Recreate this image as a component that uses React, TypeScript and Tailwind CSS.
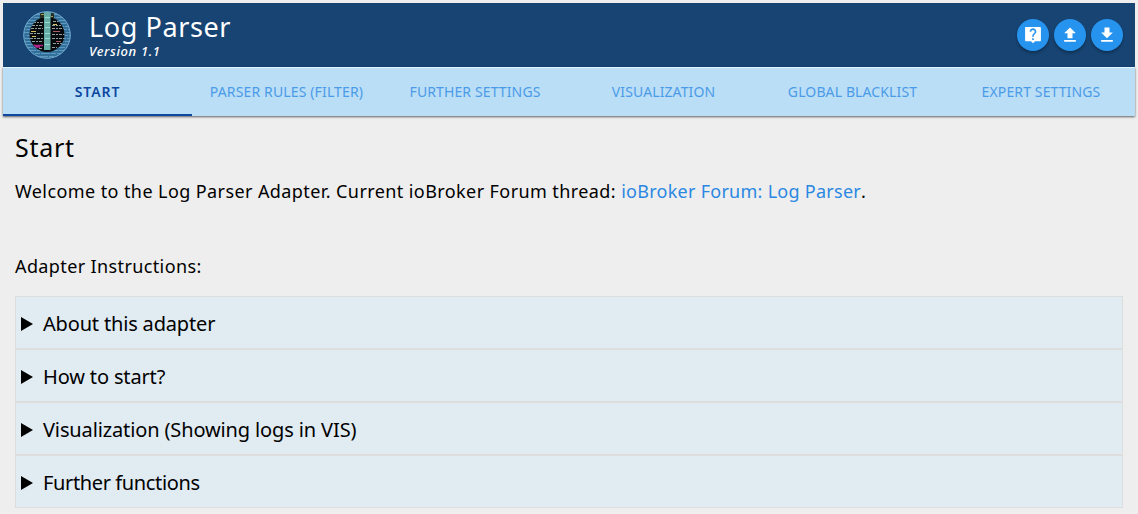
import { useState } from "react";

const tabs = [
  { label: "Start", width: "w-[189px]", tracking: "tracking-[0.9px]" },
  { label: "Parser Rules (Filter)", width: "w-[189px]", tracking: "tracking-[0.14px]" },
  { label: "Further Settings", width: "w-[188px]", tracking: "tracking-[0.12px]" },
  { label: "Visualization", width: "w-[189px]", tracking: "tracking-[0.1px]" },
  { label: "Global Blacklist", width: "w-[189px]", tracking: "tracking-[0.12px]" },
  { label: "Expert Settings", width: "w-[188px]", tracking: "tracking-[0.12px]" },
];

const sections = [
  { title: "About this adapter", tracking: "tracking-[-0.17px]" },
  { title: "How to start?", tracking: "tracking-[-0.15px]" },
  { title: "Visualization (Showing logs in VIS)", tracking: "tracking-[-0.13px]" },
  { title: "Further functions", tracking: "tracking-[-0.37px]" },
];

const actions = [
  {
    label: "Help",
    path: "M20.500 2.500H3.500c-.8 0-1 .4-1 1v15c0 .7.400 1 1 1h6l2.500 2.500 2.500-2.500h6c.7 0 1-.4 1-1v-15c0-.6-.3-1-1-1zM13 18h-2v-2h2v2zm2.070-7.750l-.9.920C13.450 11.900 13 12.500 13 14h-2v-.5c0-1.100.450-2.100 1.170-2.830l1.240-1.260c.370-.360.590-.860.590-1.410 0-1.100-.9-2-2-2s-2 .9-2 2H8c0-2.210 1.790-4 4-4s4 1.790 4 4c0 .880-.360 1.680-.930 2.250z",
  },
  { label: "Upload", path: "M9 16h6v-6h4l-7-7-7 7h4v6zm-4 2h14v2H5v-2z" },
  { label: "Download", path: "M19 9h-4V3H9v6H5l7 7 7-7zM5 18v2h14v-2H5z" },
];

function Logo() {
  return (
    <svg viewBox="0 0 48 48" className="size-12" aria-hidden="true">
      <defs>
        <clipPath id="disc"><circle cx="24" cy="24" r="23.500" /></clipPath>
        <clipPath id="core"><circle cx="24" cy="23.500" r="17.500" /></clipPath>
      </defs>
      <circle cx="24" cy="24" r="23.500" fill="#33709c" />
      <g clipPath="url(#disc)" stroke="#7db4d2" strokeWidth="1" strokeDasharray="9 1 5 1" opacity=".6">
        {[3, 6, 9, 12, 15, 18, 21, 24, 27, 30, 33, 36, 39, 42, 45].map((y) => (
          <path key={y} d={`M${y % 5} ${y + 0.5}H48`} />
        ))}
      </g>
      <circle cx="24" cy="23.500" r="17.500" fill="#080b0d" />
      <g clipPath="url(#core)" strokeWidth="1" fill="none">
        <path d="M10 11.500h10M30 10.500h7M9 14.500h11M29 14.500h9M8 17.500h12M29 17.500h12M7 22.500h13M29 23.500h13M7 27.500h13M29 27.500h12M9 30.500h11M30 32.500h9M16 37.500h4M29 36.500h5" stroke="#a9bcbc" strokeDasharray="3 1 2 1" opacity=".85" />
        <path d="M8 20.500h5M30 13.500h4M9 25.500h4" stroke="#d0bd60" />
        <path d="M10 34.500h10M12 36h5" stroke="#b02488" strokeWidth="1.500" />
        <path d="M30 20.500h7M33 30.500h5" stroke="#a26066" />
      </g>
      <path d="M17 2h4v5h-4zM28 2h3v5h-3z" fill="#252e20" />
      <path d="M18 3.500h3M28 5.500h2" stroke="#9c9b55" strokeWidth="1" />
      <path d="M21 1h6.500v38h-6.500z" fill="#67ada7" />
      <path d="M22 6.500h5M22 11.500h5M22 16.500h5M22 22.500h5M22 27.500h5M22 33.500h5" stroke="#98ddd0" strokeWidth="1" />
      <circle cx="24" cy="24" r="23.300" fill="none" stroke="#72a9cf" strokeWidth="1" />
    </svg>
  );
}

export default function App() {
  const [active, setActive] = useState(0);

  return (
    <div className="h-[514px] overflow-hidden bg-[#eeeeee] px-[3px] pt-[3px] font-['Noto_Sans',sans-serif] text-black">
      <header className="flex h-16 items-center bg-[#174473] pr-3 pl-5 text-white">
        <Logo />
        <div className="ml-[18px] flex flex-col">
          <h1 className="text-[27px] leading-8 tracking-[0.6px] whitespace-nowrap">Log Parser</h1>
          <p className="text-[13px] leading-4 font-medium tracking-[0.65px] italic">Version 1.1</p>
        </div>
        <div className="ml-auto flex gap-[5px]">
          {actions.map((action) => (
            <button key={action.label} aria-label={action.label} className="flex size-8 items-center justify-center rounded-full bg-[#2694ef] shadow-[0_2px_3px_rgba(0,0,0,0.3)]">
              <svg viewBox="0 0 24 24" className="size-5" fill="currentColor"><path d={action.path} /></svg>
            </button>
          ))}
        </div>
      </header>
      <nav className="flex h-[49px] border-t border-[#e3f2fd] bg-[#badef6] shadow-[0_1px_2px_rgba(0,0,0,0.6)]">
        {tabs.map((tab, i) => (
          <button
            key={tab.label}
            onClick={() => setActive(i)}
            className={`${tab.width} ${tab.tracking} flex shrink-0 items-center justify-center border-b-2 text-[14px] whitespace-nowrap uppercase ${active === i ? "border-[#0d47a1] font-semibold text-[#0d47a1]" : "border-transparent text-[#4b9be8]"}`}
          >
            {tab.label}
          </button>
        ))}
      </nav>
      <main className="px-3 pt-[13px]">
        <h2 className="text-[25px] leading-9 tracking-[0.7px]">Start</h2>
        <p className="mt-[14px] text-[18px] leading-6 whitespace-nowrap">
          <span className="tracking-[0.41px]">Welcome to the Log Parser Adapter. Current ioBroker Forum thread: </span>
          <a href="#" className="tracking-[0.27px] text-[#2a88e2]">ioBroker Forum: Log Parser</a>.
        </p>
        <p className="mt-[51px] text-[18px] leading-6 tracking-[0.38px]">Adapter Instructions:</p>
        <div className="mt-[18px] w-[1108px] border-t border-[#dddddd]">
          {sections.map((section) => (
            <details key={section.title} className="border-x border-b-2 border-[#dddddd] bg-[#e0ebf2] last:border-b">
              <summary className="flex h-[51px] cursor-pointer list-none items-center pt-[3px] pl-[5px] text-[20px]">
                <svg viewBox="0 0 12 14" className="mr-[10px] h-[14px] w-3"><path d="M0 0L12 7L0 14Z" /></svg>
                <span className={section.tracking}>{section.title}</span>
              </summary>
            </details>
          ))}
        </div>
      </main>
    </div>
  );
}
